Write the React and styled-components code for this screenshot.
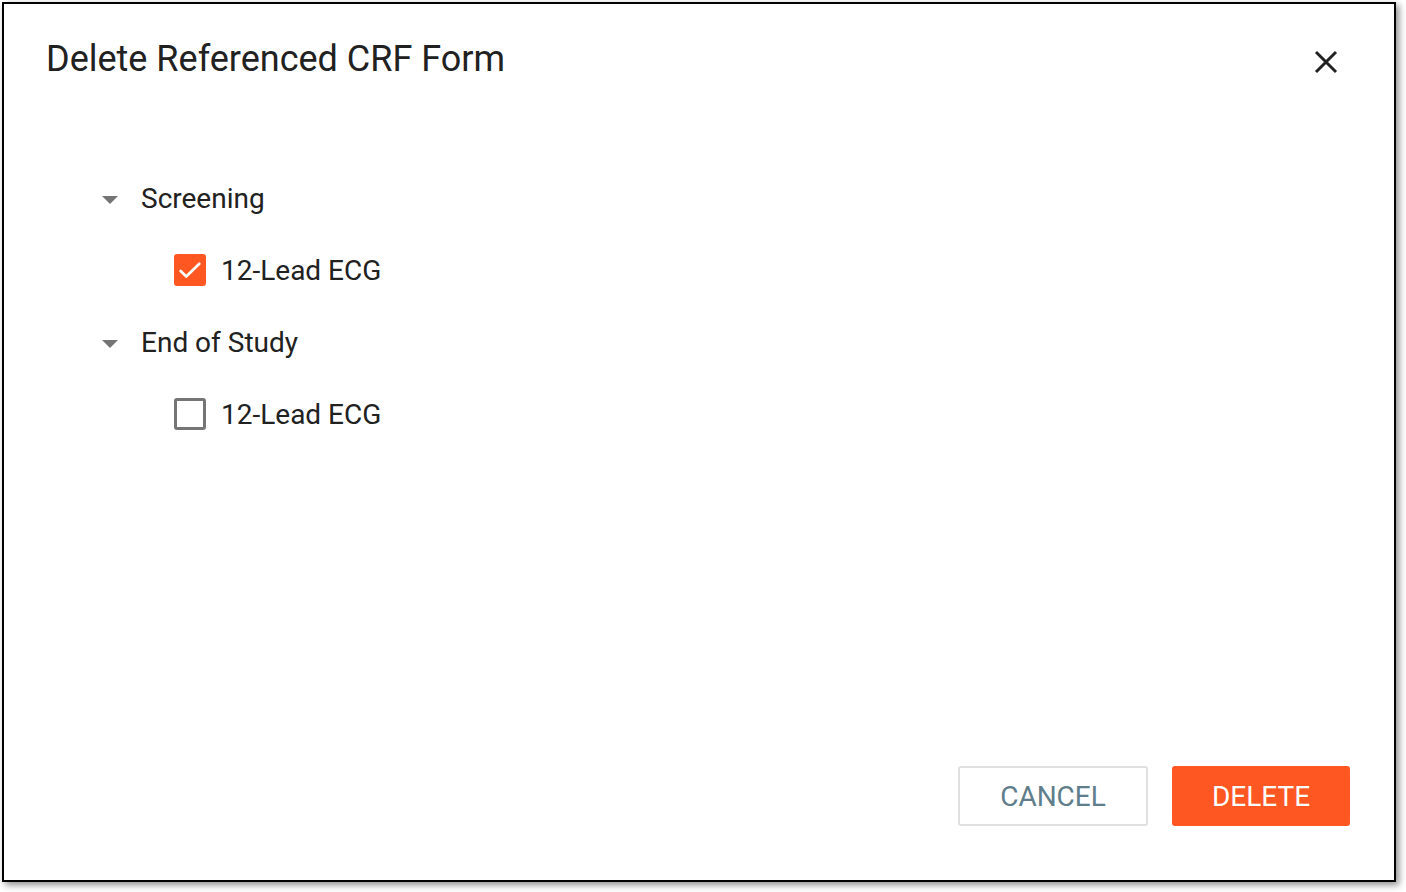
import React, { useState } from "react";
import styled, { createGlobalStyle } from "styled-components";

const GlobalStyle = createGlobalStyle`
  html, body {
    margin: 0;
    padding: 0;
    background: #fff;
  }
  body {
    font-family: Roboto, "Liberation Sans", sans-serif;
  }
`;

const Page = styled.div`
  width: 1406px;
  height: 892px;
  padding: 2px 0 0 2px;
  box-sizing: border-box;
`;

const Dialog = styled.div`
  width: 1394px;
  height: 880px;
  box-sizing: border-box;
  border: 2px solid #000;
  background: #fff;
  box-shadow: 3px 3px 7px rgba(0, 0, 0, 0.45);
  display: flex;
  flex-direction: column;
  padding: 32px 44px 54px 42px;
`;

const Header = styled.div`
  display: flex;
  justify-content: space-between;
  align-items: flex-start;
`;

const Title = styled.h2`
  margin: 0;
  font-size: 36px;
  font-weight: 400;
  line-height: 46px;
  color: #212121;
`;

const CloseButton = styled.button`
  border: none;
  background: none;
  padding: 0;
  margin-top: 13px;
  margin-right: 11px;
  width: 26px;
  height: 26px;
  cursor: pointer;
  color: #222;
  display: flex;
  align-items: center;
  justify-content: center;
`;

const Tree = styled.div`
  flex: 1;
  display: flex;
  flex-direction: column;
  padding: 80px 0 0 55px;
`;

const Group = styled.div`
  display: flex;
  flex-direction: column;
`;

const GroupRow = styled.div`
  display: flex;
  align-items: center;
  height: 72px;
  font-size: 28px;
  color: #212121;
`;

const Caret = styled.span`
  width: 0;
  height: 0;
  border-left: 8px solid transparent;
  border-right: 8px solid transparent;
  border-top: 8px solid #757575;
  margin: 4px 23px 0 1px;
`;

const ItemRow = styled.label`
  display: flex;
  align-items: center;
  height: 72px;
  padding-left: 73px;
  font-size: 28px;
  color: #212121;
  cursor: pointer;
`;

const Box = styled.span`
  width: 32px;
  height: 32px;
  box-sizing: border-box;
  border-radius: 3px;
  border: ${(p) => (p.checked ? "none" : "3px solid #757575")};
  background: ${(p) => (p.checked ? "#ff5722" : "#fff")};
  display: flex;
  align-items: center;
  justify-content: center;
  margin-right: 15px;
`;

const Footer = styled.div`
  display: flex;
  justify-content: flex-end;
  gap: 24px;
`;

const Button = styled.button`
  height: 60px;
  box-sizing: border-box;
  border-radius: 3px;
  font-family: Roboto, "Liberation Sans", sans-serif;
  font-size: 28px;
  font-weight: 400;
  padding: 0;
  cursor: pointer;
  width: ${(p) => (p.primary ? "178px" : "190px")};
  border: ${(p) => (p.primary ? "none" : "2px solid #e0e0e0")};
  background: ${(p) => (p.primary ? "#ff5722" : "#fff")};
  color: ${(p) => (p.primary ? "#fff" : "#607d8b")};
`;

const groups = [
  { name: "Screening", items: [{ id: "s1", label: "12-Lead ECG", checked: true }] },
  { name: "End of Study", items: [{ id: "e1", label: "12-Lead ECG", checked: false }] },
];

const Check = () => (
  <svg width="28" height="28" viewBox="0 0 24 24" fill="none">
    <path d="M4 12.8l4.8 4.8L20 6.6" stroke="#fff" strokeWidth="2.3" strokeLinecap="round" strokeLinejoin="round" />
  </svg>
);

const App = () => {
  const [state, setState] = useState(() => {
    const s = {};
    groups.forEach((g) => g.items.forEach((i) => (s[i.id] = i.checked)));
    return s;
  });

  return (
    <Page>
      <GlobalStyle />
      <Dialog>
        <Header>
          <Title>Delete Referenced CRF Form</Title>
          <CloseButton aria-label="close">
            <svg width="24" height="24" viewBox="0 0 24 24">
              <path d="M2 2L22 22M22 2L2 22" stroke="currentColor" strokeWidth="3" />
            </svg>
          </CloseButton>
        </Header>
        <Tree>
          {groups.map((g) => (
            <Group key={g.name}>
              <GroupRow>
                <Caret />
                {g.name}
              </GroupRow>
              {g.items.map((i) => (
                <ItemRow key={i.id} onClick={() => setState({ ...state, [i.id]: !state[i.id] })}>
                  <Box checked={state[i.id]}>{state[i.id] && <Check />}</Box>
                  {i.label}
                </ItemRow>
              ))}
            </Group>
          ))}
        </Tree>
        <Footer>
          <Button>CANCEL</Button>
          <Button primary>DELETE</Button>
        </Footer>
      </Dialog>
    </Page>
  );
};

export default App;
